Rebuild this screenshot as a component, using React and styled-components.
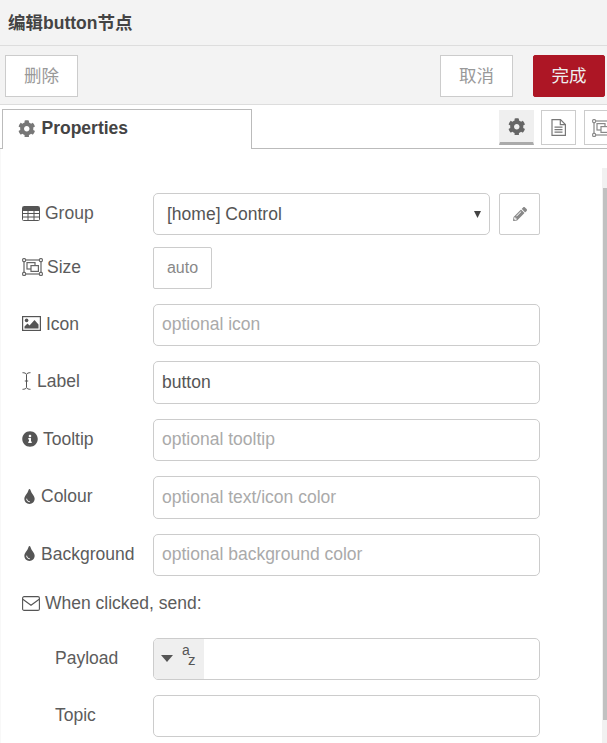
import React from "react";
import styled, { createGlobalStyle } from "styled-components";
import { FaCog, FaInfoCircle, FaTint, FaPencilAlt } from "react-icons/fa";

const FONT = `"Liberation Sans", "Noto Sans CJK SC", Arial, sans-serif`;

const Global = createGlobalStyle`
  html, body { margin: 0; padding: 0; background: #fff; }
  body { font-family: ${FONT}; font-size: 17.5px; color: #555; }
  * { box-sizing: border-box; }
`;

const Page = styled.div`
  position: relative;
  width: 607px;
  height: 743px;
  overflow: hidden;
  background: #fff;
`;

const Header = styled.div`
  height: 46px;
  padding: 0 8px 3px;
  display: flex;
  align-items: center;
  background: #f3f3f3;
  border-bottom: 1px solid #ddd;
  font-size: 17.5px;
  font-weight: bold;
  color: #444;
`;

const Toolbar = styled.div`
  height: 59px;
  padding: 9px 2px 7px 5px;
  display: flex;
  background: #f3f3f3;
  border-bottom: 1px solid #ddd;
`;

const ActionButton = styled.button`
  width: ${(p) => p.$w || 73}px;
  height: 42px;
  margin-left: ${(p) => p.$ml || 0}px;
  padding: 0 0 4px;
  font-family: ${FONT};
  font-size: 17.5px;
  border-radius: ${(p) => (p.$primary ? "2px" : "0")};
  border: 1px solid ${(p) => (p.$primary ? "#AD1625" : "#ccc")};
  background: ${(p) => (p.$primary ? "#AD1625" : "#fff")};
  color: ${(p) => (p.$primary ? "#eee" : "#999")};
`;

const Tabs = styled.div`
  margin-top: 4px;
  height: 40px;
  display: flex;
  border-bottom: 1px solid #bbb;
  padding-left: 2px;
`;

const Tab = styled.div`
  width: 250px;
  height: 40px;
  padding: 0 0 2px 15px;
  display: flex;
  align-items: center;
  gap: 6px;
  flex-shrink: 0;
  background: #fff;
  border: 1px solid #bbb;
  border-bottom: none;
  font-weight: bold;
  color: #444;
  svg { color: #777; font-size: 17.5px; }
`;

const TabButton = styled.div`
  width: 35px;
  height: 35px;
  margin: 1px 0 0 ${(p) => p.$ml}px;
  flex-shrink: 0;
  display: flex;
  align-items: center;
  padding-left: ${(p) => p.$pl || 0}px;
  justify-content: ${(p) => (p.$pl ? "flex-start" : "center")};
  font-size: 17.5px;
  color: ${(p) => (p.$active ? "#666" : "#888")};
  background: ${(p) => (p.$active ? "#efefef" : "#fff")};
  border: 1px solid ${(p) => (p.$active ? "#efefef" : "#ccc")};
  border-bottom: ${(p) => (p.$active ? "3px solid #aaa" : "1px solid #ccc")};
`;

const Form = styled.div`
  padding: 44px 0 0 22px;
  height: 594px;
  box-shadow: inset 1px 0 #f8f8f8;
`;

const Row = styled.div`
  display: flex;
  align-items: flex-start;
  height: ${(p) => p.$h || 42.5}px;
  margin-bottom: ${(p) => p.$mb ?? 15}px;
  padding-left: ${(p) => p.$indent || 0}px;
`;

const Label = styled.div`
  width: ${(p) => p.$w || 131}px;
  flex-shrink: 0;
  display: flex;
  align-items: center;
  gap: ${(p) => p.$gap ?? 4}px;
  line-height: ${(p) => p.$lh || 40}px;
  color: #5c5c5c;
  white-space: nowrap;
  svg { color: #555; font-size: ${(p) => p.$icon || 17.5}px; flex-shrink: 0; }
`;

const SelectWrap = styled.div`
  position: relative;
  width: 337px;
  height: 42px;
`;

const Select = styled.select`
  appearance: none;
  width: 100%;
  height: 42px;
  padding: 0 0 1px 13px;
  font-family: ${FONT};
  font-size: 17.5px;
  color: #555;
  background: #fff;
  border: 1px solid #ccc;
  border-radius: 5px;
`;

const SelectArrow = styled.svg`
  position: absolute;
  right: 9px;
  top: 18px;
  width: 7px;
  height: 7px;
`;

const IconButton = styled.div`
  width: 41px;
  height: 42px;
  margin-left: 9px;
  display: flex;
  align-items: center;
  justify-content: center;
  font-size: 14px;
  color: #888;
  border: 1px solid #ccc;
  border-radius: 2px;
`;

const SizeButton = styled.div`
  width: 59px;
  height: 42px;
  display: flex;
  align-items: center;
  justify-content: center;
  font-size: 16px;
  color: #888;
  border: 1px solid #ccc;
  border-radius: 2px;
`;

const Input = styled.input`
  width: 387px;
  height: ${(p) => p.$h || 42.5}px;
  padding: 0 8px;
  font-family: ${FONT};
  font-size: 17.5px;
  color: #555;
  background: #fff;
  border: 1px solid #ccc;
  border-radius: 5px;
  &::placeholder { color: #aaa; opacity: 1; }
`;

const TypedInput = styled.div`
  width: 387px;
  height: 42.5px;
  display: flex;
  border: 1px solid #ccc;
  border-radius: 5px;
  overflow: hidden;
`;

const TypeButton = styled.div`
  width: 50px;
  display: flex;
  align-items: center;
  padding-left: 7px;
  gap: 9px;
  background: #efefef;
`;

const Caret = styled.svg`
  width: 12px;
  height: 7px;
  flex-shrink: 0;
`;

const AzGlyph = styled.div`
  position: relative;
  width: 14px;
  height: 22px;
  font-size: 14px;
  line-height: 12px;
  color: #555;
  span:first-child { display: block; margin-top: -4px; }
  span:last-child { display: block; margin-left: 6px; font-size: 15px; line-height: 12px; margin-top: -2px; }
`;

const Scrollbar = styled.div`
  position: absolute;
  right: 0;
  top: 168px;
  bottom: 0;
  width: 5px;
  background: #f1f1f1;
`;

const Thumb = styled.div`
  position: absolute;
  left: 1px;
  right: 0;
  top: 20px;
  height: 532px;
  background: #c1c1c1;
`;

const DocIcon = () => (
  <svg width="15" height="17" viewBox="0 0 15 17" fill="none" stroke="#777" strokeWidth="1.2">
    <path d="M1 .6h8.5L14.4 5.5v10.9H1z" />
    <path d="M9.3.8v4.9h5" />
    <path d="M3.5 8.2h8M3.5 10.7h8M3.5 13.2h8" />
  </svg>
);

const UngroupIcon = ({ color = "#666" }) => (
  <svg width="21" height="18" viewBox="0 0 21 18" fill="none" stroke={color} strokeWidth="1.2">
    <rect x="2" y="2" width="17" height="14" />
    <rect x="5" y="4.6" width="8" height="6.4" fill="#fff" />
    <rect x="9" y="7.6" width="7.4" height="5.8" fill="#fff" />
    <g fill="#fff" strokeWidth="1.1">
      <rect x=".6" y=".6" width="3" height="3" rx="1" />
      <rect x="17.4" y=".6" width="3" height="3" rx="1" />
      <rect x=".6" y="14.4" width="3" height="3" rx="1" />
      <rect x="17.4" y="14.4" width="3" height="3" rx="1" />
    </g>
  </svg>
);

const TableIcon = () => (
  <svg width="18" height="15" viewBox="0 0 18 15" fill="none" stroke="#555" strokeWidth="1">
    <rect x=".5" y=".5" width="17" height="14" rx="1" />
    <path d="M.5 4.5h17M.5 7.5h17M.5 11h17M6 4.5V14.5M12 4.5V14.5" />
    <rect x="1" y="1" width="16" height="3" fill="#555" stroke="none" />
  </svg>
);

const ImageIcon = () => (
  <svg width="19" height="15" viewBox="0 0 19 15">
    <rect x=".6" y=".6" width="17.8" height="13.8" fill="none" stroke="#555" strokeWidth="1.2" />
    <circle cx="4.6" cy="4.4" r="1.8" fill="#555" />
    <path d="M2.5 12.5v-2l3-3 2 2 5-5.5 4 4.5v4z" fill="#555" />
  </svg>
);

const CursorIcon = () => (
  <svg width="9" height="18" viewBox="0 0 9 18" fill="none" stroke="#555" strokeWidth="1">
    <path d="M.5.7c2 0 3.4.5 4 1.6C5.1 1.2 6.500.7 8.500.7M4.500 2.300v13.400M.5 17.300c2 0 3.400-.5 4-1.600.6 1.100 2 1.600 4 1.600M2.800 9h3.400" />
  </svg>
);

const EnvelopeIcon = () => (
  <svg width="18" height="15" viewBox="0 0 18 15" fill="none" stroke="#555" strokeWidth="1.100">
    <rect x=".6" y=".6" width="16.800" height="13.800" rx="1.500" />
    <path d="M.8 3.200 9 9.300l8.200-6.100" />
  </svg>
);

export default function App() {
  return (
    <Page>
      <Global />
      <Header>编辑button节点</Header>
      <Toolbar>
        <ActionButton>删除</ActionButton>
        <ActionButton $ml={362}>取消</ActionButton>
        <ActionButton $ml={20} $w={72} $primary>完成</ActionButton>
      </Toolbar>
      <Tabs>
        <Tab><FaCog />Properties</Tab>
        <TabButton $ml={247} $active><FaCog /></TabButton>
        <TabButton $ml={7}><DocIcon /></TabButton>
        <TabButton $ml={8} $pl={7}><UngroupIcon color="#888" /></TabButton>
      </Tabs>
      <Form>
        <Row $mb={11}>
          <Label $gap={5}><TableIcon />Group</Label>
          <SelectWrap>
            <Select defaultValue="c"><option value="c">[home] Control</option></Select>
            <SelectArrow viewBox="0 0 7 7"><path d="M0 0h7L3.500 7z" fill="#444" /></SelectArrow>
          </SelectWrap>
          <IconButton><FaPencilAlt /></IconButton>
        </Row>
        <Row $h={42}>
          <Label $gap={4}><UngroupIcon />Size</Label>
          <SizeButton>auto</SizeButton>
        </Row>
        <Row>
          <Label $gap={5}><ImageIcon />Icon</Label>
          <Input placeholder="optional icon" />
        </Row>
        <Row>
          <Label $gap={6}><CursorIcon />Label</Label>
          <Input defaultValue="button" />
        </Row>
        <Row>
          <Label $gap={5} $icon={16}><FaInfoCircle />Tooltip</Label>
          <Input placeholder="optional tooltip" />
        </Row>
        <Row>
          <Label $gap={4} $icon={15}><FaTint />Colour</Label>
          <Input placeholder="optional text/icon color" />
        </Row>
        <Row>
          <Label $gap={4} $icon={15}><FaTint />Background</Label>
          <Input placeholder="optional background color" />
        </Row>
        <Row $h={31.5}>
          <Label $gap={5} $lh={25}><EnvelopeIcon />When clicked, send:</Label>
        </Row>
        <Row $indent={33}>
          <Label $w={98}>Payload</Label>
          <TypedInput>
            <TypeButton>
              <Caret viewBox="0 0 12 7"><path d="M0 0h12L6 7z" fill="#555" /></Caret>
              <AzGlyph><span>a</span><span>z</span></AzGlyph>
            </TypeButton>
          </TypedInput>
        </Row>
        <Row $indent={33}>
          <Label $w={98}>Topic</Label>
          <Input $h={42} />
        </Row>
      </Form>
      <Scrollbar><Thumb /></Scrollbar>
    </Page>
  );
}
